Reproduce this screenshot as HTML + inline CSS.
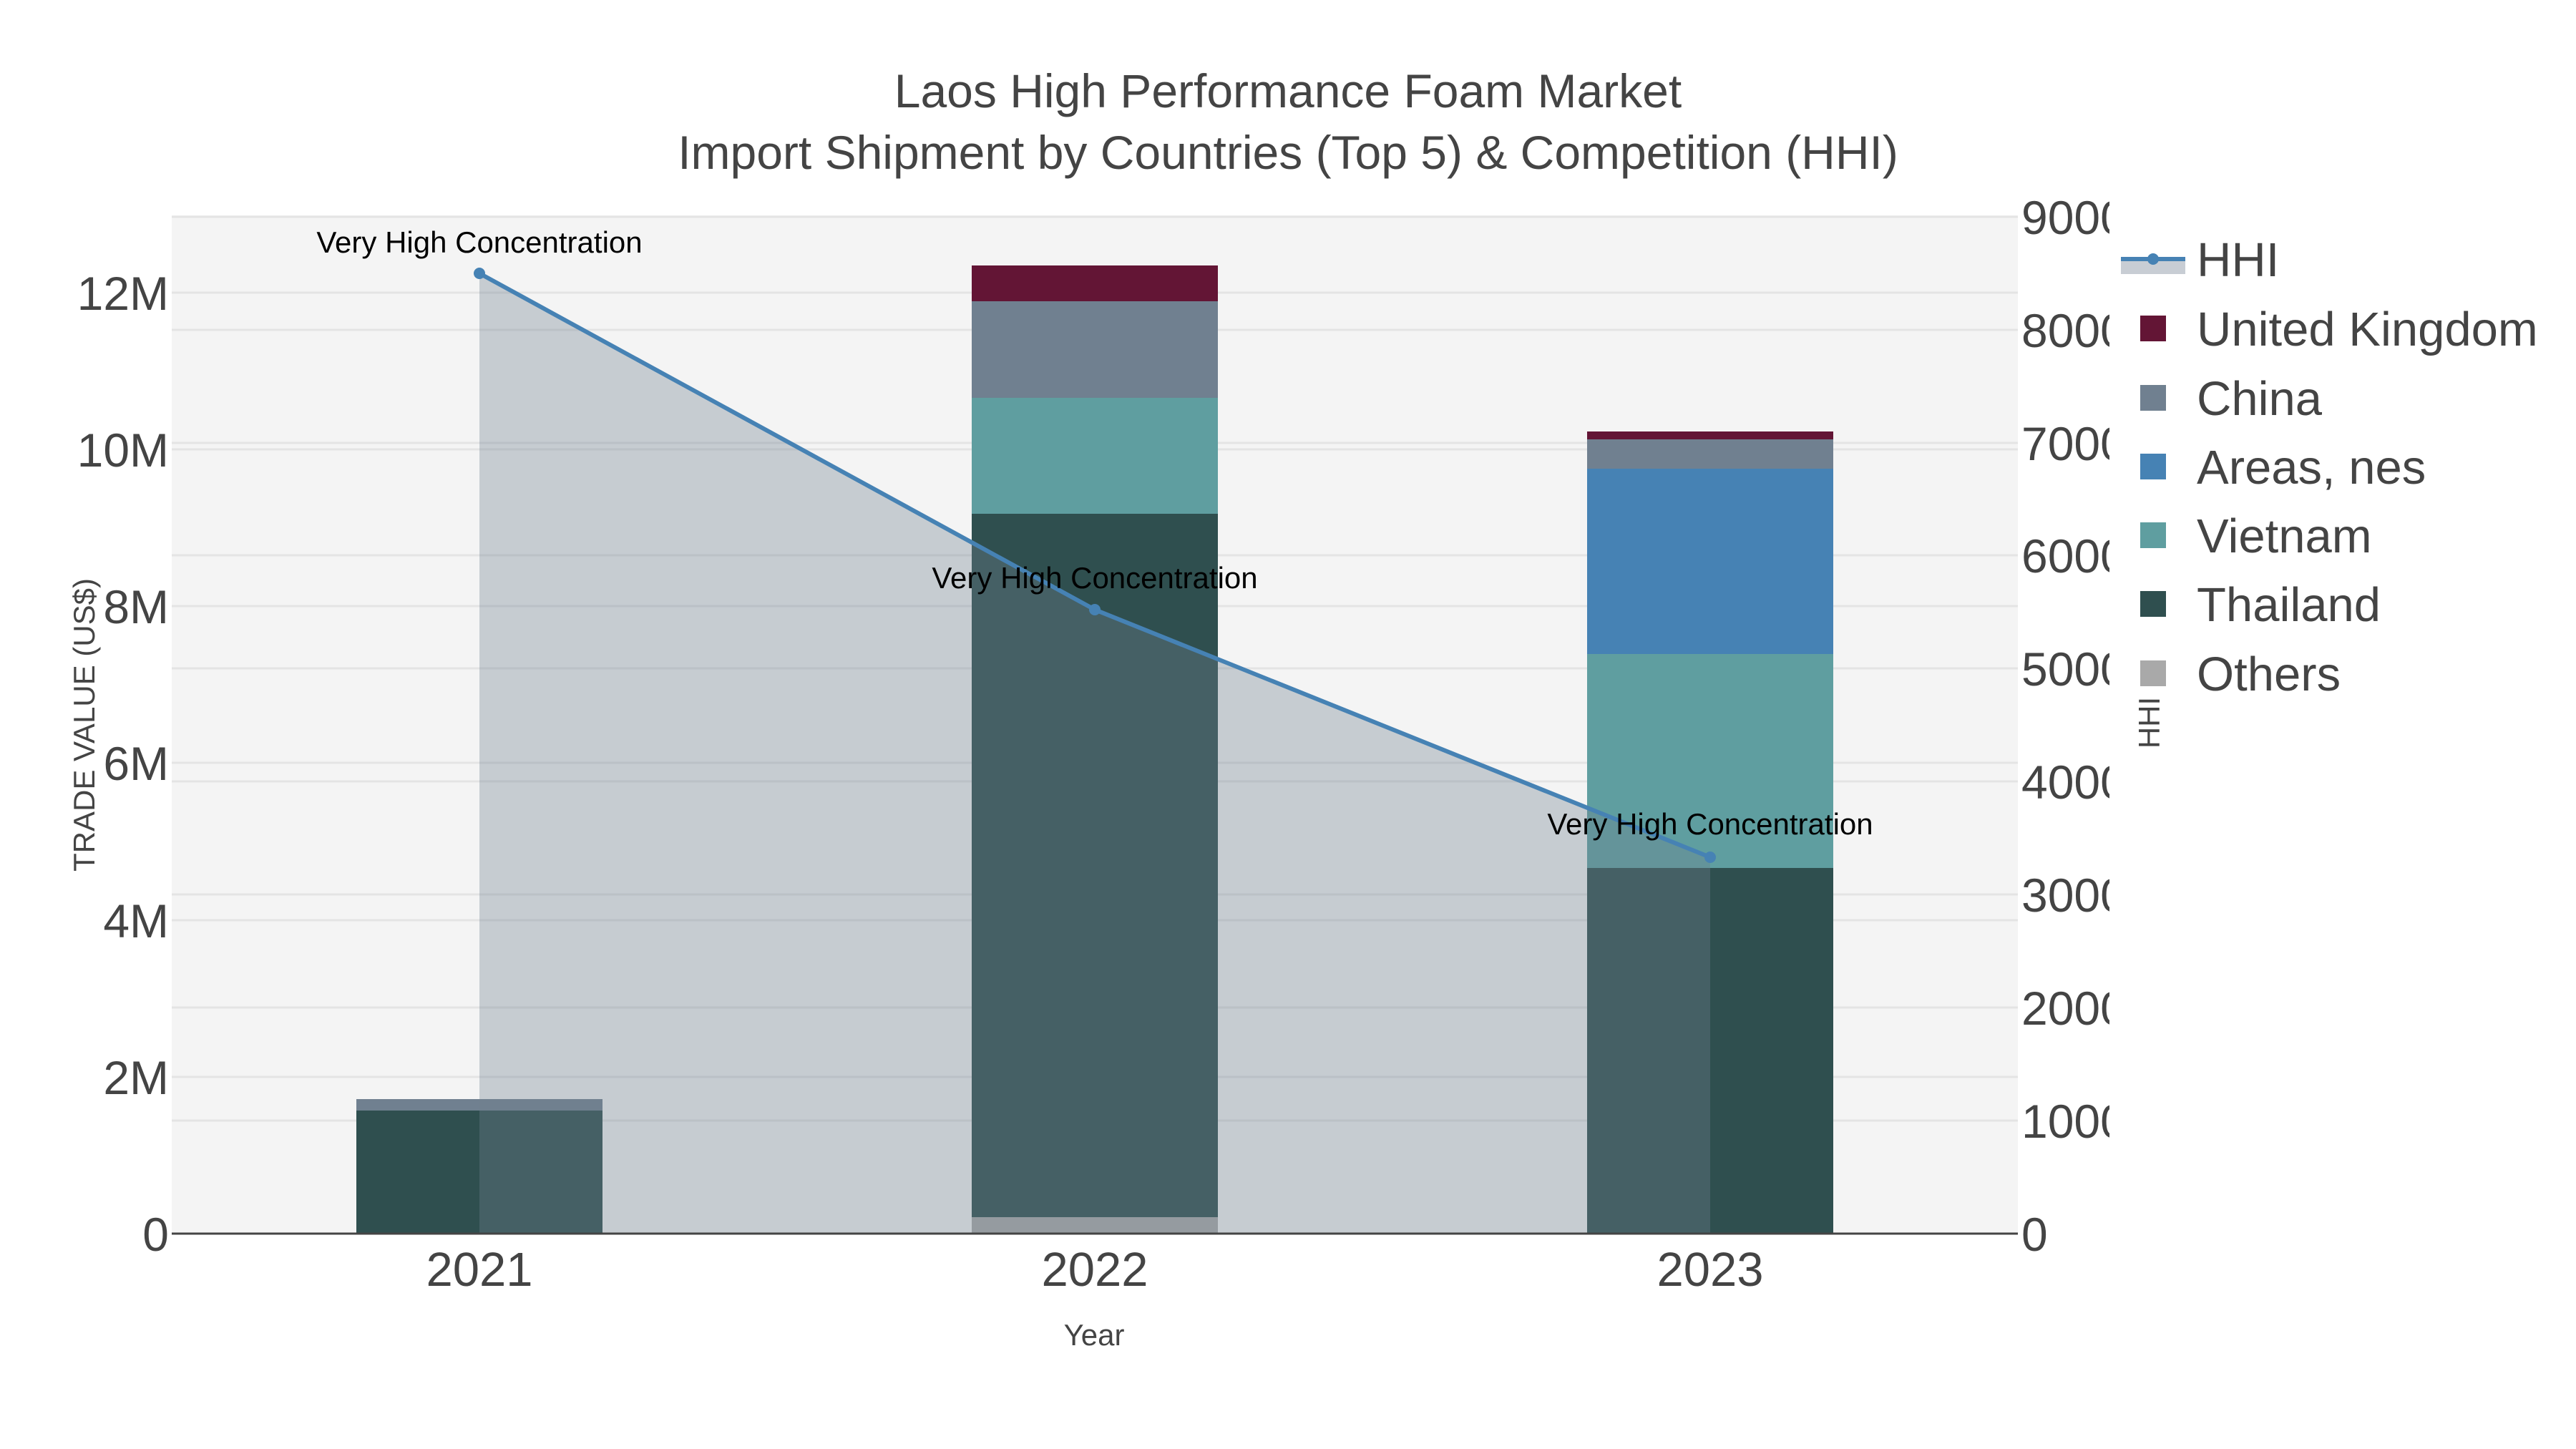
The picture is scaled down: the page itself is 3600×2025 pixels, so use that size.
<!DOCTYPE html>
<html><head><meta charset="utf-8"><style>html,body{margin:0;padding:0;background:#fff}svg{display:block}</style></head>
<body>
<svg width="3600" height="2025" viewBox="0 0 3600 2025" xmlns="http://www.w3.org/2000/svg" font-family="Liberation Sans, Arial, sans-serif">
<defs><clipPath id="rc"><rect x="2800" y="200" width="148" height="1600"/></clipPath></defs>
<rect width="3600" height="2025" fill="#fff"/>
<rect x="240" y="301" width="2580" height="1423" fill="#f4f4f4"/>
<g stroke="#e4e4e4" stroke-width="3">
<line x1="240" x2="2820" y1="1505" y2="1505"/><line x1="240" x2="2820" y1="1286" y2="1286"/>
<line x1="240" x2="2820" y1="1066" y2="1066"/><line x1="240" x2="2820" y1="847" y2="847"/>
<line x1="240" x2="2820" y1="628" y2="628"/><line x1="240" x2="2820" y1="409" y2="409"/>
<line x1="240" x2="2820" y1="1566" y2="1566"/><line x1="240" x2="2820" y1="1408" y2="1408"/>
<line x1="240" x2="2820" y1="1250" y2="1250"/><line x1="240" x2="2820" y1="1092" y2="1092"/>
<line x1="240" x2="2820" y1="934" y2="934"/><line x1="240" x2="2820" y1="776" y2="776"/>
<line x1="240" x2="2820" y1="619" y2="619"/><line x1="240" x2="2820" y1="461" y2="461"/>
<line x1="240" x2="2820" y1="303" y2="303"/>
</g>
<rect x="498" y="1552" width="344" height="172" fill="#2f4f4f"/>
<rect x="498" y="1536" width="344" height="16" fill="#708090"/>
<rect x="1358" y="1701" width="344" height="23" fill="#a9a9a9"/>
<rect x="1358" y="718" width="344" height="983" fill="#2f4f4f"/>
<rect x="1358" y="556" width="344" height="162" fill="#5f9ea0"/>
<rect x="1358" y="421" width="344" height="135" fill="#708090"/>
<rect x="1358" y="371" width="344" height="50" fill="#631535"/>
<rect x="2218" y="1213" width="344" height="511" fill="#2f4f4f"/>
<rect x="2218" y="914" width="344" height="299" fill="#5f9ea0"/>
<rect x="2218" y="655" width="344" height="259" fill="#4682b4"/>
<rect x="2218" y="614" width="344" height="41" fill="#708090"/>
<rect x="2218" y="603" width="344" height="11" fill="#631535"/>
<polygon points="670,382 1530,852 2390,1198 2390,1724 670,1724" fill="rgba(112,128,144,0.35)"/>
<polyline points="670,382 1530,852 2390,1198" fill="none" stroke="#4682b4" stroke-width="6"/>
<circle cx="670" cy="382" r="8" fill="#4682b4"/><circle cx="1530" cy="852" r="8" fill="#4682b4"/><circle cx="2390" cy="1198" r="8" fill="#4682b4"/>
<line x1="240" x2="2820" y1="1724" y2="1724" stroke="#444" stroke-width="3"/>
<g font-size="42" fill="#000" text-anchor="middle">
<text x="670" y="353">Very High Concentration</text>
<text x="1530" y="822">Very High Concentration</text>
<text x="2390" y="1166">Very High Concentration</text>
</g>
<g font-size="66" fill="#444" text-anchor="middle">
<text x="1800" y="150">Laos High Performance Foam Market</text>
<text x="1800" y="236">Import Shipment by Countries (Top 5) &amp; Competition (HHI)</text>
</g>
<g font-size="67" fill="#444" text-anchor="middle">
<text x="670" y="1797">2021</text><text x="1530" y="1797">2022</text><text x="2390" y="1797">2023</text>
</g>
<g font-size="66" fill="#444" text-anchor="end">
<text x="236" y="1748">0</text><text x="236" y="1529">2M</text><text x="236" y="1310">4M</text>
<text x="236" y="1090">6M</text><text x="236" y="871">8M</text><text x="236" y="652">10M</text><text x="236" y="433">12M</text>
</g>
<g font-size="66" fill="#444" clip-path="url(#rc)">
<text x="2825" y="1748">0</text><text x="2825" y="1590">1000</text><text x="2825" y="1432">2000</text>
<text x="2825" y="1274">3000</text><text x="2825" y="1116">4000</text><text x="2825" y="958">5000</text>
<text x="2825" y="800">6000</text><text x="2825" y="643">7000</text><text x="2825" y="485">8000</text><text x="2825" y="327">9000</text>
</g>
<g font-size="42" fill="#444" text-anchor="middle">
<text x="1529" y="1880">Year</text>
<text transform="translate(132,1013) rotate(-90)">TRADE VALUE (US$)</text>
<text transform="translate(3018,1010) rotate(-90)">HHI</text>
</g>
<rect x="2964" y="362" width="90" height="21" fill="#c8cdd4"/>
<line x1="2964" x2="3054" y1="362" y2="362" stroke="#4682b4" stroke-width="6"/>
<circle cx="3009" cy="362" r="8" fill="#4682b4"/>
<rect x="2991" y="441" width="36" height="36" fill="#631535"/>
<rect x="2991" y="538" width="36" height="36" fill="#708090"/>
<rect x="2991" y="634" width="36" height="36" fill="#4682b4"/>
<rect x="2991" y="730" width="36" height="36" fill="#5f9ea0"/>
<rect x="2991" y="826" width="36" height="36" fill="#2f4f4f"/>
<rect x="2991" y="923" width="36" height="36" fill="#a9a9a9"/>
<g font-size="67" fill="#444">
<text x="3070" y="386">HHI</text>
<text x="3070" y="483">United Kingdom</text>
<text x="3070" y="580">China</text>
<text x="3070" y="676">Areas, nes</text>
<text x="3070" y="772">Vietnam</text>
<text x="3070" y="868">Thailand</text>
<text x="3070" y="965">Others</text>
</g>
</svg>
</body></html>
